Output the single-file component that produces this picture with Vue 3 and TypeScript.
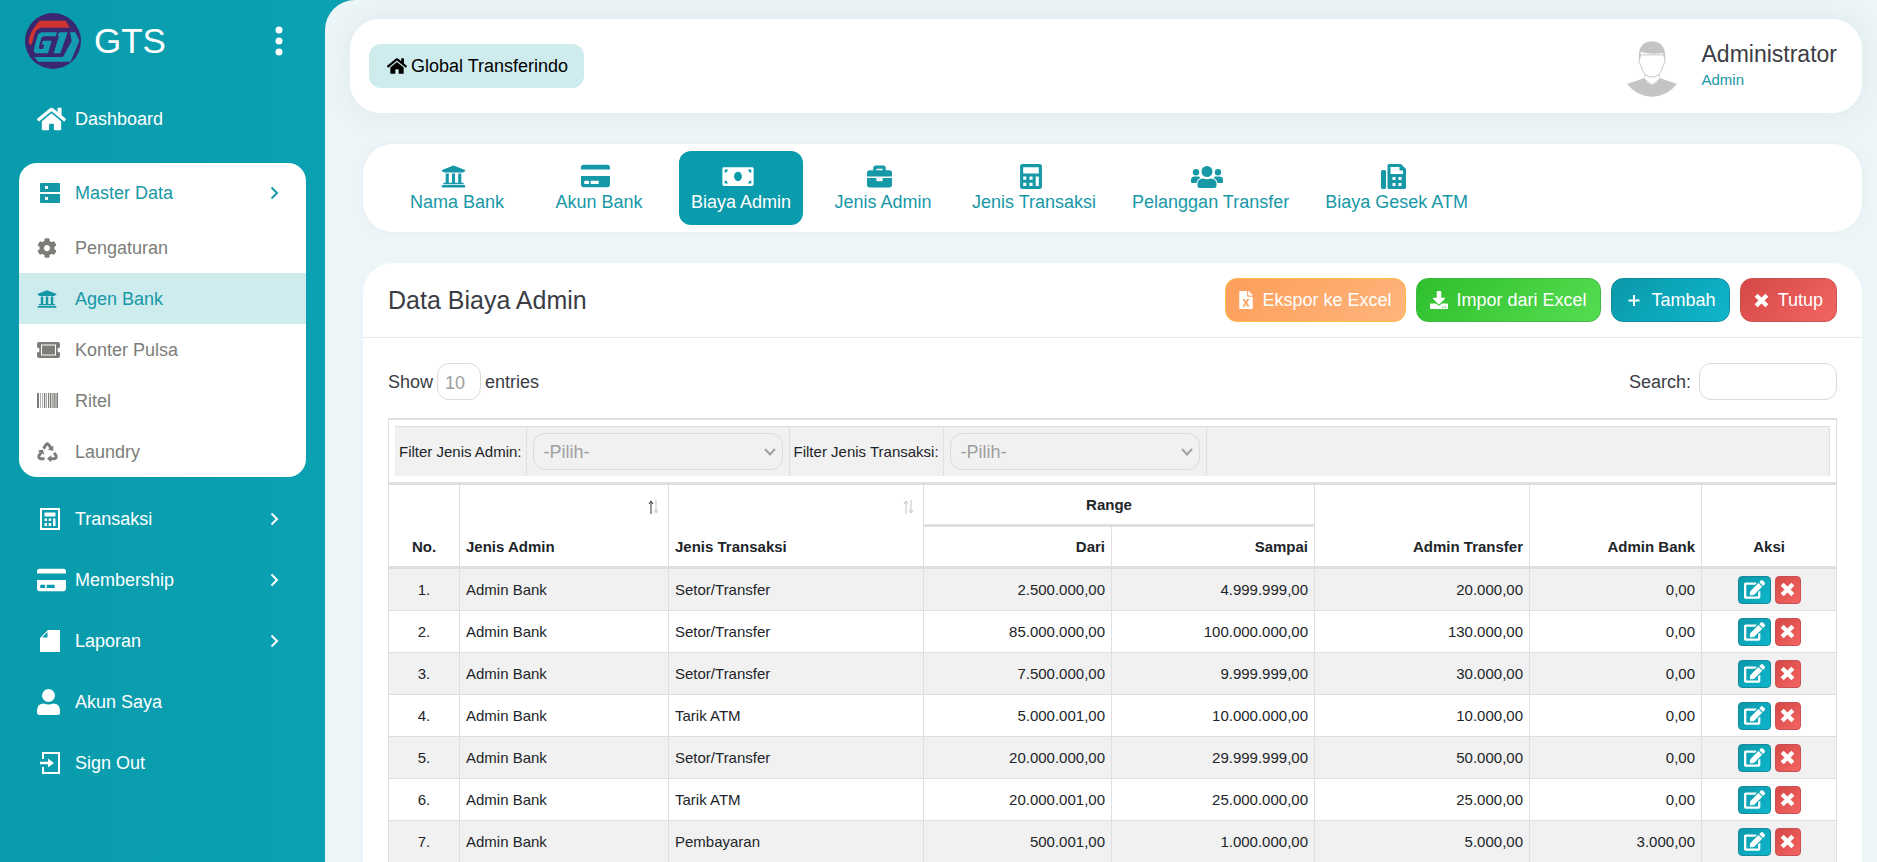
<script setup lang="ts">
import { h, ref } from 'vue'

interface Glyph {
  box: string
  w: number
  h: number
  fill?: string
  line?: string
  stroke?: number
}

const bank =
  'M496 128v16a8 8 0 0 1-8 8h-24v12c0 6.627-5.373 12-12 12H60c-6.627 0-12-5.373-12-12v-12H24a8 8 0 0 1-8-8v-16a8 8 0 0 1 4.941-7.392l232-88a7.996 7.996 0 0 1 6.118 0l232 88A8 8 0 0 1 496 128zm-24 304H40c-13.255 0-24 10.745-24 24v16a8 8 0 0 0 8 8h464a8 8 0 0 0 8-8v-16c0-13.255-10.745-24-24-24zM96 192v192H60c-6.627 0-12 5.373-12 12v20h416v-20c0-6.627-5.373-12-12-12h-36V192h-64v192h-64V192h-64v192h-64V192H96z'
const home =
  'M280.37 148.26L96 300.11V464a16 16 0 0 0 16 16l112.06-.29a16 16 0 0 0 15.92-16V368a16 16 0 0 1 16-16h64a16 16 0 0 1 16 16v95.64a16 16 0 0 0 16 16.05L464 480a16 16 0 0 0 16-16V300L295.67 148.26a12.19 12.19 0 0 0-15.3 0zM571.6 251.47L488 182.56V44.05a12 12 0 0 0-12-12h-56a12 12 0 0 0-12 12v72.61L318.47 43a48 48 0 0 0-61 0L4.34 251.47a12 12 0 0 0-1.6 16.9l25.5 31A12 12 0 0 0 45.15 301l235.22-193.74a12.19 12.19 0 0 1 15.3 0L530.9 301a12 12 0 0 0 16.9-1.6l25.5-31a12 12 0 0 0-1.7-16.93z'
const card =
  'M0 432c0 26.5 21.5 48 48 48h480c26.5 0 48-21.5 48-48V256H0v176zm192-68c0-6.6 5.4-12 12-12h136c6.6 0 12 5.4 12 12v40c0 6.6-5.4 12-12 12H204c-6.6 0-12-5.4-12-12v-40zm-128 0c0-6.6 5.4-12 12-12h72c6.6 0 12 5.4 12 12v40c0 6.6-5.4 12-12 12H76c-6.6 0-12-5.4-12-12v-40zM576 80v48H0V80c0-26.5 21.5-48 48-48h480c26.5 0 48 21.5 48 48z'

const glyphs: Record<string, Glyph> = {
  home: { box: '0 0 576 512', w: 29, h: 26, fill: home },
  homeSmall: { box: '0 0 576 512', w: 20, h: 18, fill: home },
  bank: { box: '0 0 512 512', w: 20, h: 20, fill: bank },
  bankLarge: { box: '0 0 512 512', w: 25, h: 25, fill: bank },
  card: { box: '0 0 576 512', w: 29, h: 26, fill: card },
  server: {
    box: '0 0 20 20', w: 20, h: 20,
    fill: 'M1 0H19Q20 0 20 1V9H0V1Q0 0 1 0zM5 3V6H8V3zM0 11H20V19Q20 20 19 20H1Q0 20 0 19zM5 14V17H8V14z',
  },
  gear: {
    box: '0 0 512 512', w: 20, h: 20,
    fill: 'M487.4 315.7l-42.6-24.6c4.3-23.2 4.3-47 0-70.2l42.6-24.6c4.9-2.8 7.1-8.6 5.5-14-11.1-35.6-30-67.8-54.7-94.6-3.8-4.1-10-5.1-14.8-2.3L380.8 110c-17.9-15.4-38.5-27.3-60.8-35.1V25.8c0-5.6-3.9-10.5-9.4-11.7-36.7-8.2-74.3-7.8-109.2 0-5.5 1.2-9.4 6.1-9.4 11.7V75c-22.2 7.9-42.8 19.8-60.8 35.1L88.7 85.5c-4.9-2.8-11-1.9-14.8 2.3-24.7 26.7-43.6 58.9-54.7 94.6-1.7 5.4.6 11.2 5.5 14L67.3 221c-4.3 23.2-4.3 47 0 70.2l-42.6 24.6c-4.9 2.8-7.1 8.6-5.5 14 11.1 35.6 30 67.8 54.7 94.6 3.8 4.1 10 5.1 14.8 2.3l42.6-24.6c17.9 15.4 38.5 27.3 60.8 35.1v49.2c0 5.6 3.9 10.5 9.4 11.7 36.7 8.2 74.3 7.8 109.2 0 5.5-1.2 9.4-6.1 9.4-11.7v-49.2c22.2-7.9 42.8-19.8 60.8-35.1l42.6 24.6c4.9 2.8 11 1.9 14.8-2.3 24.7-26.7 43.6-58.9 54.7-94.6 1.5-5.5-.7-11.3-5.6-14.1zM256 336c-44.1 0-80-35.9-80-80s35.9-80 80-80 80 35.9 80 80-35.9 80-80 80z',
  },
  ticket: {
    box: '0 0 23 16', w: 23, h: 16,
    fill: 'M2 0H21Q23 0 23 2V5.500A2.500 2.500 0 0 0 23 10.500V14Q23 16 21 16H2Q0 16 0 14V10.500A2.500 2.500 0 0 0 0 5.500V2Q0 0 2 0zM4 2.500V13.500H19V2.500zM5 3.500H18V12.500H5z',
  },
  barcode: {
    box: '0 0 21 15', w: 21, h: 15,
    fill: 'M0 0H2V15H0zM3 0H3.6V15H3zM5 0H5.6V15H5zM7 0H8.3V15H7zM9 0H9.6V15H9zM11 0H12V15H11zM12.8 0H14.4V15H12.8zM15.4 0H16.6V15H15.4zM17.2 0H18.6V15H17.2zM19.4 0H21V15H19.4z',
  },
  recycle: {
    box: '0 0 21 20', w: 21, h: 20, stroke: 3,
    line: 'M6.6 6.6L8.9 2.8Q10.3 .8 11.8 2.8L13.8 6M17.2 10.8L19 13.8Q19.8 16.4 17 16.7H13.5M7.5 16.7H4Q1.2 16.4 2 13.8L4 10.6',
    fill: 'M16.2 3.4L16.3 9L10.8 7.4zM10 16.7L14.2 13V20.4zM0.6 8.8L6 7.4L7.4 12.8z',
  },
  ledger: {
    box: '0 0 20 22', w: 20, h: 22,
    fill: 'M0 0H20V22H0zM2 2V20H18V2zM4.5 4.5H15.5V8.5H4.5zM4.5 10.5H7V13H4.5zM8.7 10.5H11.2V13H8.7zM13 10.5H15.5V18H13zM4.5 15H7V18H4.5zM8.7 15H11.2V18H8.7z',
  },
  page: { box: '0 0 20 22', w: 20, h: 22, fill: 'M8 0H20V22H0V8zM7.5 2L2 7.5H7.5z' },
  user: {
    box: '0 0 23 26', w: 23, h: 26,
    fill: 'M11.5 0A6.5 6.5 0 1 1 11.5 13A6.5 6.5 0 1 1 11.5 0zM7 14.5Q11.5 16.5 16 14.5Q23 14.5 23 21.5V23.5Q23 26 20.5 26H2.5Q0 26 0 23.5V21.5Q0 14.5 7 14.5z',
  },
  exit: {
    box: '0 0 20 22', w: 20, h: 22,
    fill: 'M2 0H20V22H2V15H4V20H18V2H4V7H2zM0 9.7H8V6.5L14 11L8 15.5V12.3H0z',
  },
  chevron: { box: '0 0 9 14', w: 9, h: 14, line: 'M1.5 1.5L7 7L1.5 12.5', stroke: 2 },
  caret: { box: '0 0 12 8', w: 12, h: 8, line: 'M1 1L6 6.5L11 1', stroke: 2 },
  money: {
    box: '0 0 640 512', w: 32, h: 25,
    fill: 'M608 64H32C14.33 64 0 78.33 0 96v320c0 17.67 14.33 32 32 32h576c17.67 0 32-14.33 32-32V96c0-17.67-14.33-32-32-32zM48 400v-64c35.35 0 64 28.65 64 64H48zm0-224v-64h64c0 35.35-28.65 64-64 64zm272 176c-44.19 0-80-42.99-80-96 0-53.02 35.82-96 80-96s80 42.98 80 96c0 53.03-35.83 96-80 96zm272 48h-64c0-35.35 28.65-64 64-64v64zm0-224c-35.35 0-64-28.65-64-64h64v64z',
  },
  briefcase: {
    box: '0 0 512 512', w: 25, h: 25,
    fill: 'M320 336c0 8.84-7.16 16-16 16h-96c-8.84 0-16-7.16-16-16v-48H0v144c0 25.6 22.4 48 48 48h416c25.6 0 48-22.4 48-48V288H320v48zm144-208h-80V80c0-25.6-22.4-48-48-48H176c-25.6 0-48 22.4-48 48v48H48c-25.6 0-48 22.4-48 48v80h512v-80c0-25.6-22.4-48-48-48zm-144 0H192V96h128v32z',
  },
  calculator: {
    box: '0 0 448 512', w: 22, h: 25,
    fill: 'M48 0H400Q448 0 448 48V464Q448 512 400 512H48Q0 512 0 464V48Q0 0 48 0zM64 64V192H384V64zM64 256V320H128V256zM192 256V320H256V256zM320 256V448H384V256zM64 384V448H128V384zM192 384V448H256V384z',
  },
  users: {
    box: '0 0 32 25', w: 32, h: 25,
    fill: 'M16 2A5.5 5.5 0 1 1 16 13A5.5 5.5 0 1 1 16 2zM5 5A3.2 3.2 0 1 1 5 11.4A3.2 3.2 0 1 1 5 5zM27 5A3.2 3.2 0 1 1 27 11.4A3.2 3.2 0 1 1 27 5zM12 14.5Q16 16 20 14.5Q25.5 15 25.5 20V21.5Q25.5 24 23 24H9Q6.5 24 6.5 21.5V20Q6.5 15 12 14.5zM3.5 12.5H7Q8.5 12.5 9.3 13.7Q6 15.5 5.5 19H1Q0 19 0 18V16Q0 12.5 3.5 12.5zM28.5 12.5H25Q23.5 12.5 22.7 13.7Q26 15.5 26.5 19H31Q32 19 32 18V16Q32 12.5 28.5 12.5z',
  },
  fax: {
    box: '0 0 25 25', w: 25, h: 25,
    fill: 'M1.5 6H3.5Q5 6 5 7.5V23.5Q5 25 3.5 25H1.5Q0 25 0 23.5V7.5Q0 6 1.5 6zM8 0H20L25 5V23.5Q25 25 23.5 25H8Q6.5 25 6.5 23.5V1.5Q6.5 0 8 0zM9.5 3V10H22V6.5H18.5V3zM11.5 13V16H14.5V13zM17.5 13V16H20.5V13zM11.5 19V22H14.5V19zM17.5 19V22H20.5V19z',
  },
  excel: {
    box: '0 0 384 512', w: 14, h: 18,
    fill: 'M224 136V0H24C10.7 0 0 10.7 0 24v464c0 13.3 10.7 24 24 24h336c13.3 0 24-10.7 24-24V160H248c-13.2 0-24-10.8-24-24zm60.1 106.5L224 336l60.1 93.5c5.1 8-.6 18.5-10.1 18.5h-34.9c-4.4 0-8.5-2.4-10.6-6.3C208.9 405.5 192 373 192 373c-6.4 14.8-10 20-36.6 68.8-2.1 3.9-6.1 6.3-10.5 6.3H110c-9.5 0-15.2-10.5-10.1-18.5l60.3-93.5-60.3-93.5c-5.2-8 .6-18.5 10.1-18.5h34.8c4.4 0 8.5 2.4 10.6 6.3 26.1 48.8 20 33.6 36.6 68.5 0 0 6.1-11.7 36.6-68.5 2.1-3.9 6.2-6.3 10.6-6.3H274c9.5-.1 15.2 10.4 10.1 18.4zM384 121.9v6.1H256V0h6.1c6.4 0 12.5 2.5 17 7l97.9 98c4.5 4.5 7 10.6 7 16.9z',
  },
  download: {
    box: '0 0 512 512', w: 18, h: 18,
    fill: 'M216 0h80c13.3 0 24 10.7 24 24v168h87.7c17.8 0 26.7 21.5 14.1 34.1L269.7 378.3c-7.5 7.5-19.8 7.5-27.3 0L90.1 226.1c-12.6-12.6-3.7-34.1 14.1-34.1H192V24c0-13.3 10.7-24 24-24zm296 376v112c0 13.3-10.7 24-24 24H24c-13.3 0-24-10.7-24-24V376c0-13.3 10.7-24 24-24h146.7l49 49c20.1 20.1 52.5 20.1 72.6 0l49-49H488c13.3 0 24 10.7 24 24zm-124 88c0-11-9-20-20-20s-20 9-20 20 9 20 20 20 20-9 20-20zm64 0c0-11-9-20-20-20s-20 9-20 20 9 20 20 20 20-9 20-20z',
  },
  plus: { box: '0 0 18 18', w: 18, h: 18, line: 'M9 4V15M3.5 9.5H14.5', stroke: 2 },
  cross: { box: '0 0 14 14', w: 15, h: 15, line: 'M2 2L12 12M12 2L2 12', stroke: 4 },
  edit: {
    box: '0 0 576 512', w: 21, h: 19,
    fill: 'M402.6 83.2l90.2 90.2c3.8 3.8 3.8 10 0 13.8L274.4 405.6l-92.8 10.3c-12.4 1.4-22.9-9.1-21.5-21.5l10.3-92.8L388.8 83.2c3.8-3.8 10-3.8 13.8 0zm162-22.9l-48.8-48.8c-15.2-15.2-39.9-15.2-55.2 0l-35.4 35.4c-3.8 3.8-3.8 10 0 13.8l90.2 90.2c3.8 3.8 10 3.8 13.8 0l35.4-35.4c15.2-15.3 15.2-40 0-55.2zM384 346.2V448H64V128h229.8c3.2 0 6.2-1.3 8.5-3.5l40-40c7.6-7.6 2.2-20.5-8.5-20.5H48C21.5 64 0 85.5 0 112v352c0 26.5 21.5 48 48 48h352c26.5 0 48-21.5 48-48V306.2c0-10.7-12.9-16-20.5-8.5l-40 40c-2.2 2.3-3.5 5.3-3.5 8.5z',
  },
}

const Icon = (props: { name: string }) => {
  const g = glyphs[props.name]
  return h('svg', { viewBox: g.box, width: g.w, height: g.h, 'aria-hidden': 'true' }, [
    g.fill ? h('path', { d: g.fill, fill: 'currentColor', 'fill-rule': 'evenodd' }) : null,
    g.line ? h('path', { d: g.line, fill: 'none', stroke: 'currentColor', 'stroke-width': g.stroke }) : null,
  ])
}
Icon.props = ['name']

const masterItems = [
  { icon: 'gear', label: 'Pengaturan' },
  { icon: 'bank', label: 'Agen Bank', active: true },
  { icon: 'ticket', label: 'Konter Pulsa' },
  { icon: 'barcode', label: 'Ritel' },
  { icon: 'recycle', label: 'Laundry' },
]

const lowerItems = [
  { icon: 'ledger', label: 'Transaksi', more: true, inset: true },
  { icon: 'card', label: 'Membership', more: true },
  { icon: 'page', label: 'Laporan', more: true, inset: true },
  { icon: 'user', label: 'Akun Saya' },
  { icon: 'exit', label: 'Sign Out', inset: true },
]

const tabs = [
  { icon: 'bankLarge', label: 'Nama Bank' },
  { icon: 'card', label: 'Akun Bank' },
  { icon: 'money', label: 'Biaya Admin', active: true },
  { icon: 'briefcase', label: 'Jenis Admin' },
  { icon: 'calculator', label: 'Jenis Transaksi' },
  { icon: 'users', label: 'Pelanggan Transfer' },
  { icon: 'fax', label: 'Biaya Gesek ATM' },
]

const rows = [
  ['Admin Bank', 'Setor/Transfer', '2.500.000,00', '4.999.999,00', '20.000,00', '0,00'],
  ['Admin Bank', 'Setor/Transfer', '85.000.000,00', '100.000.000,00', '130.000,00', '0,00'],
  ['Admin Bank', 'Setor/Transfer', '7.500.000,00', '9.999.999,00', '30.000,00', '0,00'],
  ['Admin Bank', 'Tarik ATM', '5.000.001,00', '10.000.000,00', '10.000,00', '0,00'],
  ['Admin Bank', 'Setor/Transfer', '20.000.000,00', '29.999.999,00', '50.000,00', '0,00'],
  ['Admin Bank', 'Tarik ATM', '20.000.001,00', '25.000.000,00', '25.000,00', '0,00'],
  ['Admin Bank', 'Pembayaran', '500.001,00', '1.000.000,00', '5.000,00', '3.000,00'],
]

const search = ref('')
</script>

<template>
  <div class="shell">
    <aside class="sidebar">
      <div class="brand">
        <svg class="logo" viewBox="0 0 168 168" width="56" height="56" aria-hidden="true">
          <circle cx="84" cy="84" r="84" fill="#3b276f" />
          <path d="M44 23H122L134 44H50Q34 47 29 62L19 97L11 90Q11 66 27 44z" fill="#cf3431" />
          <path d="M51 58H96L92 70H58Q51 70 49 76L42 100Q40 108 47 108H54L58 95H50L54 83H80L69 121H37Q24 121 27 107L37 71Q40 59 51 58z" fill="#149bb0" />
          <path d="M102 58H128L106 121H86L102 70H98z" fill="#149bb0" />
          <path d="M135 58H151L163 83L137 146H40L28 132H114L140 84z" fill="#149bb0" />
        </svg>
        <span class="brand-name">GTS</span>
        <button class="dots" type="button" aria-label="Menu">
          <svg viewBox="0 0 8 30" width="8" height="30">
            <circle cx="4" cy="4" r="3.5" fill="#fff" />
            <circle cx="4" cy="15" r="3.5" fill="#fff" />
            <circle cx="4" cy="26" r="3.5" fill="#fff" />
          </svg>
        </button>
      </div>
      <nav>
        <a class="nav-item" href="#">
          <span class="nav-icon"><Icon name="home" /></span>Dashboard
        </a>
        <div class="group">
          <a class="nav-item group-head" href="#">
            <span class="nav-icon inset"><Icon name="server" /></span>Master Data
            <Icon class="more" name="chevron" />
          </a>
          <a v-for="item in masterItems" :key="item.label" class="sub-item" :class="{ active: item.active }" href="#">
            <span class="nav-icon"><Icon :name="item.icon" /></span>{{ item.label }}
          </a>
        </div>
        <a v-for="item in lowerItems" :key="item.label" class="nav-item" href="#">
          <span class="nav-icon" :class="{ inset: item.inset }"><Icon :name="item.icon" /></span>{{ item.label }}
          <Icon v-if="item.more" class="more" name="chevron" />
        </a>
      </nav>
    </aside>

    <main class="content">
      <header class="topbar">
        <a class="company" href="#"><Icon name="homeSmall" />Global Transferindo</a>
        <div class="profile">
          <svg class="avatar" viewBox="0 0 152 170" width="50" height="56" aria-hidden="true">
            <path d="M0 130Q30 121 52 112Q60 128 76 133Q92 128 100 112Q124 121 152 130Q122 169 76 169Q30 169 0 130z" fill="#c4c4c4" />
            <path d="M40 42H112L116 62L109 78Q101 109 76 110Q51 109 43 78L36 62z" fill="#fff" stroke="#c4c4c4" stroke-width="3" />
            <path d="M54 102V116L76 132L98 116V102Q76 118 54 102z" fill="#fff" stroke="#c4c4c4" stroke-width="2" />
            <path d="M37 60Q30 3 76 1Q122 3 115 60L110 36Q72 42 42 33L40 56z" fill="#c4c4c4" />
          </svg>
          <div>
            <div class="person">Administrator</div>
            <div class="role">Admin</div>
          </div>
        </div>
      </header>

      <nav class="tabs">
        <a v-for="tab in tabs" :key="tab.label" class="tab" :class="{ active: tab.active }" href="#">
          <span class="tab-icon"><Icon :name="tab.icon" /></span>
          <span>{{ tab.label }}</span>
        </a>
      </nav>

      <section class="panel">
        <div class="panel-head">
          <h1>Data Biaya Admin</h1>
          <div class="actions">
            <button class="btn orange" type="button"><Icon name="excel" />Ekspor ke Excel</button>
            <button class="btn green" type="button"><Icon name="download" />Impor dari Excel</button>
            <button class="btn teal" type="button"><Icon name="plus" />Tambah</button>
            <button class="btn red" type="button"><Icon name="cross" />Tutup</button>
          </div>
        </div>

        <div class="panel-body">
          <div class="controls">
            <label class="length">
              Show
              <select class="field size"><option>10</option></select>
              entries
            </label>
            <label class="search">
              Search:
              <input v-model="search" class="field" type="search" />
            </label>
          </div>

          <table class="grid">
            <colgroup>
              <col class="c-no" /><col class="c-admin" /><col class="c-trans" /><col class="c-from" />
              <col class="c-to" /><col class="c-fee" /><col class="c-bank" /><col class="c-act" />
            </colgroup>
            <thead>
              <tr>
                <td class="filter-cell" colspan="8">
                  <div class="filters">
                    <label class="filter-label" for="f-admin">Filter Jenis Admin:</label>
                    <div class="filter-box">
                      <select id="f-admin" class="field"><option>-Pilih-</option></select>
                      <Icon class="caret" name="caret" />
                    </div>
                    <label class="filter-label" for="f-trans">Filter Jenis Transaksi:</label>
                    <div class="filter-box">
                      <select id="f-trans" class="field"><option>-Pilih-</option></select>
                      <Icon class="caret" name="caret" />
                    </div>
                  </div>
                </td>
              </tr>
              <tr>
                <th class="center" rowspan="2">No.</th>
                <th rowspan="2">
                  Jenis Admin
                  <svg class="sort" viewBox="0 0 11 14" width="11" height="14" aria-hidden="true">
                    <path d="M3 14V2M1 4L3 1L5 4" fill="none" stroke="#333" />
                    <path d="M8 0V12M6 10L8 13L10 10" fill="none" stroke="#c4c4c8" />
                  </svg>
                </th>
                <th rowspan="2">
                  Jenis Transaksi
                  <svg class="sort" viewBox="0 0 11 14" width="11" height="14" aria-hidden="true">
                    <path d="M3 14V2M1 4L3 1L5 4M8 0V12M6 10L8 13L10 10" fill="none" stroke="#c4c4c8" />
                  </svg>
                </th>
                <th class="center range" colspan="2">Range</th>
                <th class="num" rowspan="2">Admin Transfer</th>
                <th class="num" rowspan="2">Admin Bank</th>
                <th class="center" rowspan="2">Aksi</th>
              </tr>
              <tr>
                <th class="num">Dari</th>
                <th class="num">Sampai</th>
              </tr>
            </thead>
            <tbody>
              <tr v-for="(row, i) in rows" :key="i">
                <td class="center">{{ i + 1 }}.</td>
                <td v-for="(cell, j) in row" :key="j" :class="{ num: j > 1 }">{{ cell }}</td>
                <td>
                  <div class="row-actions">
                    <button class="mini teal" type="button" aria-label="Edit"><Icon name="edit" /></button>
                    <button class="mini narrow red" type="button" aria-label="Hapus"><Icon name="cross" /></button>
                  </div>
                </td>
              </tr>
            </tbody>
          </table>
        </div>
      </section>
    </main>
  </div>
</template>

<style>
body {
  margin: 0;
  overflow: hidden;
}
</style>

<style scoped>
* {
  box-sizing: border-box;
}
.shell {
  display: flex;
  height: 100vh;
  overflow: hidden;
  background: linear-gradient(90deg, #099bab, #0aa1b3 325px);
  font-family: 'Liberation Sans', Arial, sans-serif;
  font-size: 18px;
  line-height: 24px;
  color: #3a3d44;
}
a {
  color: inherit;
  text-decoration: none;
}
svg {
  display: block;
  flex: none;
}
button,
select,
input {
  font: inherit;
  margin: 0;
}
.sidebar {
  flex: none;
  width: 325px;
  padding: 0 19px;
  color: #fff;
}
.brand {
  display: flex;
  align-items: center;
  height: 88px;
  padding: 0 23px 6px 6px;
}
.brand-name {
  margin-left: 13px;
  font-size: 35px;
  line-height: 40px;
}
.dots {
  margin-left: auto;
  padding: 0;
  border: 0;
  background: none;
}
.nav-item,
.sub-item {
  display: flex;
  align-items: center;
  padding: 0 27px 0 18px;
  height: 61px;
}
.nav-icon {
  flex: none;
  width: 38px;
}
.inset {
  padding-left: 3px;
}
.more {
  margin-left: auto;
}
.group {
  margin: 14px 0 11px;
  overflow: hidden;
  border-radius: 18px;
  background: #fff;
  color: #7c7d79;
}
.group-head,
.sub-item.active {
  color: #1798a7;
}
.group-head {
  height: 59px;
}
.sub-item {
  height: 51px;
}
.sub-item.active {
  background: #ceebed;
}
.content {
  flex: 1;
  min-width: 0;
  height: 100vh;
  overflow: hidden;
  padding: 19px 15px 0 25px;
  border-radius: 30px 0 0 0;
  background: #ecf5f7;
}
.topbar {
  display: flex;
  align-items: center;
  justify-content: space-between;
  height: 94px;
  padding: 0 25px 0 19px;
  border-radius: 30px;
  background: #fff;
  box-shadow: 0 0 30px rgba(60, 60, 60, 0.08);
}
.company {
  display: flex;
  align-items: center;
  gap: 4px;
  height: 44px;
  padding: 0 16px 0 18px;
  border-radius: 12px;
  background: #ceebed;
  color: #000;
}
.profile {
  display: flex;
  align-items: center;
  gap: 25px;
}
.avatar {
  margin-top: 6px;
}
.person {
  font-size: 23px;
  line-height: 28px;
}
.role {
  color: #1798a7;
  font-size: 15px;
  line-height: 24px;
}
.tabs {
  display: flex;
  align-items: center;
  gap: 18px;
  height: 88px;
  margin: 31px 0 31px 13px;
  padding: 0 32px;
  border-radius: 30px;
  background: #fff;
  color: #1798a7;
  box-shadow: 0 0 12px rgba(60, 60, 60, 0.03);
}
.tab {
  display: flex;
  flex-direction: column;
  align-items: center;
  justify-content: center;
  min-width: 124px;
  height: 74px;
  padding: 0 9px;
  border-radius: 12px;
}
.tab.active {
  background: #0a9bad;
  color: #fff;
}
.tab-icon {
  display: flex;
  align-items: center;
  height: 27px;
  margin-right: 7px;
}
.panel {
  margin-left: 13px;
  border-radius: 30px 30px 0 0;
  background: #fff;
}
.panel-head {
  display: flex;
  align-items: center;
  justify-content: space-between;
  height: 75px;
  padding: 0 25px;
  border-bottom: 1px solid #e6e9ea;
}
h1 {
  margin: 0;
  font-size: 25px;
  font-weight: 400;
  line-height: 32px;
}
.actions {
  display: flex;
  align-items: center;
  gap: 10px;
}
.btn {
  display: flex;
  align-items: center;
  gap: 9px;
  height: 44px;
  padding: 0 13px;
  border: 1px solid;
  border-radius: 12px;
  color: #fff;
  white-space: nowrap;
}
.orange {
  border-color: #fcbb45;
  background: linear-gradient(135deg, #fd9e5a, #feb57c);
}
.green {
  border-color: #3fbb40;
  background: linear-gradient(135deg, #2fbf2d, #55dd51);
}
.teal {
  border-color: #15899a;
  background: linear-gradient(135deg, #0a98a9, #0fb6cc);
}
.red {
  border-color: #ca5052;
  background: linear-gradient(135deg, #d64845, #f36563);
}
.panel-body {
  padding: 25px;
}
.controls {
  display: flex;
  align-items: center;
  justify-content: space-between;
  margin-bottom: 18px;
}
.length,
.search {
  display: flex;
  align-items: center;
  gap: 4px;
}
.search {
  gap: 8px;
}
.field {
  display: block;
  width: 138px;
  height: 37px;
  padding: 2px 10px 0;
  border: 1px solid #d9dbdd;
  border-radius: 12px;
  outline: 0;
  background: transparent;
  color: #a0a0a0;
  appearance: none;
}
.size {
  width: 44px;
  padding: 2px 7px 0;
}
.grid {
  width: 100%;
  table-layout: fixed;
  border-collapse: separate;
  border-spacing: 0;
  border-top: 2px solid #dddfe2;
  border-right: 1px solid #dddfe2;
  color: #212529;
  font-size: 15px;
  line-height: 20px;
}
.c-no { width: 71px; }
.c-admin { width: 209px; }
.c-trans { width: 255px; }
.c-from { width: 188px; }
.c-to { width: 203px; }
.c-fee { width: 215px; }
.c-bank { width: 172px; }
.c-act { width: 135px; }
.grid th,
.grid td {
  height: 42px;
  padding: 0 6px;
  border-left: 1px solid #dddfe2;
  border-bottom: 1px solid #dddfe2;
  text-align: left;
}
.grid th {
  position: relative;
  padding-bottom: 9px;
  border-bottom-width: 3px;
  vertical-align: bottom;
}
.grid .num {
  text-align: right;
}
.grid .center {
  text-align: center;
}
.grid .range {
  padding-right: 26px;
}
.grid tbody tr:nth-child(odd) td {
  background: #f1f1f1;
}
.grid .filter-cell {
  padding: 6px;
  border-bottom-width: 3px;
}
.sort {
  position: absolute;
  top: 15px;
  right: 9px;
}
.filters {
  display: flex;
  height: 50px;
  border-top: 1px solid #dddfe2;
  border-right: 1px solid #dddfe2;
  background: #f1f1f1;
}
.filter-label,
.filter-box {
  display: flex;
  align-items: center;
  padding: 0 4px;
  border-right: 1px solid #dddfe2;
}
.filter-box {
  position: relative;
  padding: 0 6px;
}
.filter-box .field {
  width: 250px;
  padding: 0 10px;
  font-size: 18px;
}
.caret {
  position: absolute;
  right: 13px;
  color: #a0a0a0;
  pointer-events: none;
}
.row-actions {
  display: flex;
  justify-content: center;
  gap: 4px;
}
.mini {
  display: flex;
  align-items: center;
  justify-content: center;
  width: 33px;
  height: 28px;
  padding: 0;
  border: 1px solid;
  border-radius: 4px;
  color: #fff;
}
.mini.narrow {
  width: 26px;
}
.mini.teal {
  border-color: #15899a;
}
.mini.red {
  border-color: #ca5052;
}
</style>
